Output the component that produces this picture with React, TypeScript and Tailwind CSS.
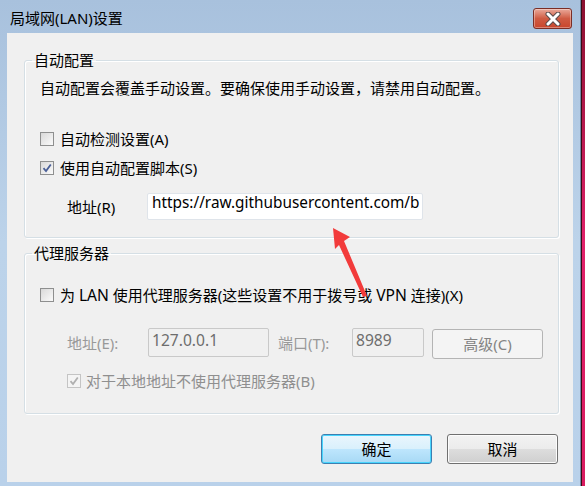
import React from "react";

const FONT = { fontFamily: '"Noto Sans", "Noto Sans CJK SC", sans-serif' };

function CheckBox({ checked, disabled }: { checked?: boolean; disabled?: boolean }) {
  return (
    <div
      className={
        "w-[14px] h-[14px] border flex items-center justify-center shrink-0 " +
        (disabled
          ? "border-[#c4c4c4] bg-[#f4f4f4]"
          : "border-[#8e8f8f] bg-gradient-to-br from-[#d8d8d8] to-[#fafafa]")
      }
    >
      <div
        className={
          "w-[10px] h-[10px] flex items-center justify-center " +
          (disabled ? "" : "bg-gradient-to-br from-[#dcdcdc] to-[#f8f8f8]")
        }
      >
        {checked && (
          <svg width="10" height="10" viewBox="0 0 10 10">
            <path
              d="M1.5 5.2 L4 8 L8.8 1.5"
              fill="none"
              stroke={disabled ? "#b0b0b0" : "#4a5f97"}
              strokeWidth="1.8"
            />
          </svg>
        )}
      </div>
    </div>
  );
}

export default function App() {
  return (
    <div className="relative w-[585px] h-[486px] flex overflow-hidden text-[15px] text-black" style={FONT}>
      {/* window */}
      <div className="w-[581px] h-[486px] flex flex-col bg-gradient-to-b from-[#a8c1dd] via-[#bcd3ea] to-[#b9d1ea] border-r border-[#6f8aa8]">
        {/* title bar */}
        <div className="h-[33px] flex items-start shrink-0">
          <div className="ml-[10px] mt-[8px] leading-[20px] text-[15px] text-black">局域网(LAN)设置</div>
          <div className="ml-auto mr-[8px] mt-[8px] w-[39px] h-[21px] rounded-[3px] border border-[#7a2e26] bg-gradient-to-b from-[#e9a99b] via-[#cf5b43] to-[#c9452c] flex items-center justify-center shadow-[inset_0_0_0_1px_rgba(255,255,255,0.35)]">
            <svg width="16" height="14" viewBox="0 0 16 14">
              <path d="M3 2 L13 12 M13 2 L3 12" stroke="#5a4a4a" strokeWidth="5" strokeLinecap="round" />
              <path d="M3 2 L13 12 M13 2 L3 12" stroke="#ffffff" strokeWidth="3" strokeLinecap="round" />
            </svg>
          </div>
        </div>
        {/* content */}
        <div className="ml-[7px] mr-[7px] h-[449px] bg-[#f0f0f0] flex flex-col shrink-0">
          {/* group 1 */}
          <fieldset className="ml-[17px] mt-[19px] w-[535px] border border-[#d5dfe5] rounded-[3px] shadow-[inset_1px_1px_0_#ffffff,1px_1px_0_#ffffff] px-0 pb-[17px]">
            <legend className="ml-[7px] px-[2px] leading-[16px] text-[15px]">自动配置</legend>
            <div className="ml-[15px] mt-[10px] leading-[20px]">自动配置会覆盖手动设置。要确保使用手动设置，请禁用自动配置。</div>
            <div className="ml-[15px] mt-[31px] h-[20px] flex items-center">
              <CheckBox />
              <span className="ml-[6px] leading-[20px]">自动检测设置(A)</span>
            </div>
            <div className="ml-[15px] mt-[9px] h-[20px] flex items-center">
              <CheckBox checked />
              <span className="ml-[6px] leading-[20px]">使用自动配置脚本(S)</span>
            </div>
            <div className="mt-[15px] flex items-center">
              <span className="ml-[42px] w-[80px] leading-[20px]">地址(R)</span>
              <div className="w-[276px] h-[27px] bg-white border border-[#dfe4ea] rounded-[2px] overflow-hidden whitespace-nowrap pl-[4px] text-[15.35px] leading-[17px]">
                https://raw.githubusercontent.com/b
              </div>
            </div>
          </fieldset>
          {/* group 2 */}
          <fieldset className="ml-[17px] mt-[7px] w-[535px] border border-[#d5dfe5] rounded-[3px] shadow-[inset_1px_1px_0_#ffffff,1px_1px_0_#ffffff] px-0 pb-[22px]">
            <legend className="ml-[7px] px-[2px] leading-[16px] text-[15px]">代理服务器</legend>
            <div className="ml-[15px] mt-[24px] h-[20px] flex items-center">
              <CheckBox />
              <span className="ml-[6px] leading-[20px] whitespace-nowrap">
                为 <span className="text-[15.6px]">LAN</span> 使用代理服务器(这些设置不用于拨号或 <span className="text-[15.6px]">VPN</span> 连接)(X)
              </span>
            </div>
            <div className="mt-[23px] flex items-start">
              <span className="ml-[42px] w-[81px] mt-[5px] leading-[20px] text-[#999999]">地址(E):</span>
              <div className="w-[121px] h-[29px] border border-[#c9c9c9] rounded-[2px] pl-[3px] leading-[22px] text-[15.6px] text-[#6d6d6d]">127.0.0.1</div>
              <span className="ml-[9px] w-[74px] mt-[5px] leading-[20px] text-[#999999]">端口(T):</span>
              <div className="w-[72px] h-[29px] border border-[#c9c9c9] rounded-[2px] pl-[3px] leading-[22px] text-[15.6px] text-[#6d6d6d]">8989</div>
              <div className="ml-[8px] mt-[1px] w-[111px] h-[30px] border border-[#b4b4b4] rounded-[3px] bg-[#f4f4f4] flex items-center justify-center text-[#838383] leading-[20px]">高级(C)</div>
            </div>
            <div className="ml-[42px] mt-[12px] h-[20px] flex items-center">
              <CheckBox checked disabled />
              <span className="ml-[5px] leading-[20px] text-[#8f8f8f]">对于本地地址不使用代理服务器(B)</span>
            </div>
          </fieldset>
          {/* buttons */}
          <div className="mt-[20px] flex justify-end mr-[15px] gap-[15px]">
            <div className="w-[111px] h-[30px] rounded-[3px] border border-[#3c7fb1] shadow-[inset_0_0_0_1px_#48d5fd] bg-[linear-gradient(#eaf6fd_0%,#d9f0fc_50%,#bee6fd_50%,#a7d9f5_100%)] flex items-center justify-center leading-[20px]">确定</div>
            <div className="w-[111px] h-[30px] rounded-[3px] border border-[#707070] shadow-[inset_0_0_0_1px_#fcfcfc] bg-[linear-gradient(#f2f2f2_0%,#ebebeb_50%,#dddddd_50%,#cfcfcf_100%)] flex items-center justify-center leading-[20px]">取消</div>
          </div>
        </div>
      </div>
      {/* desktop strip */}
      <div className="w-[4px] h-[486px] bg-gradient-to-b from-[#8a1030] via-[#e0206a] to-[#d81b60] border-l border-[#3a0b14]" />
      {/* red arrow annotation */}
      <svg className="absolute left-0 top-0 pointer-events-none" width="585" height="486" viewBox="0 0 585 486">
        <polygon points="333,228 350,237 344,241 367,296 363,297 339,245 335,249" fill="#f23b3b" />
      </svg>
    </div>
  );
}
